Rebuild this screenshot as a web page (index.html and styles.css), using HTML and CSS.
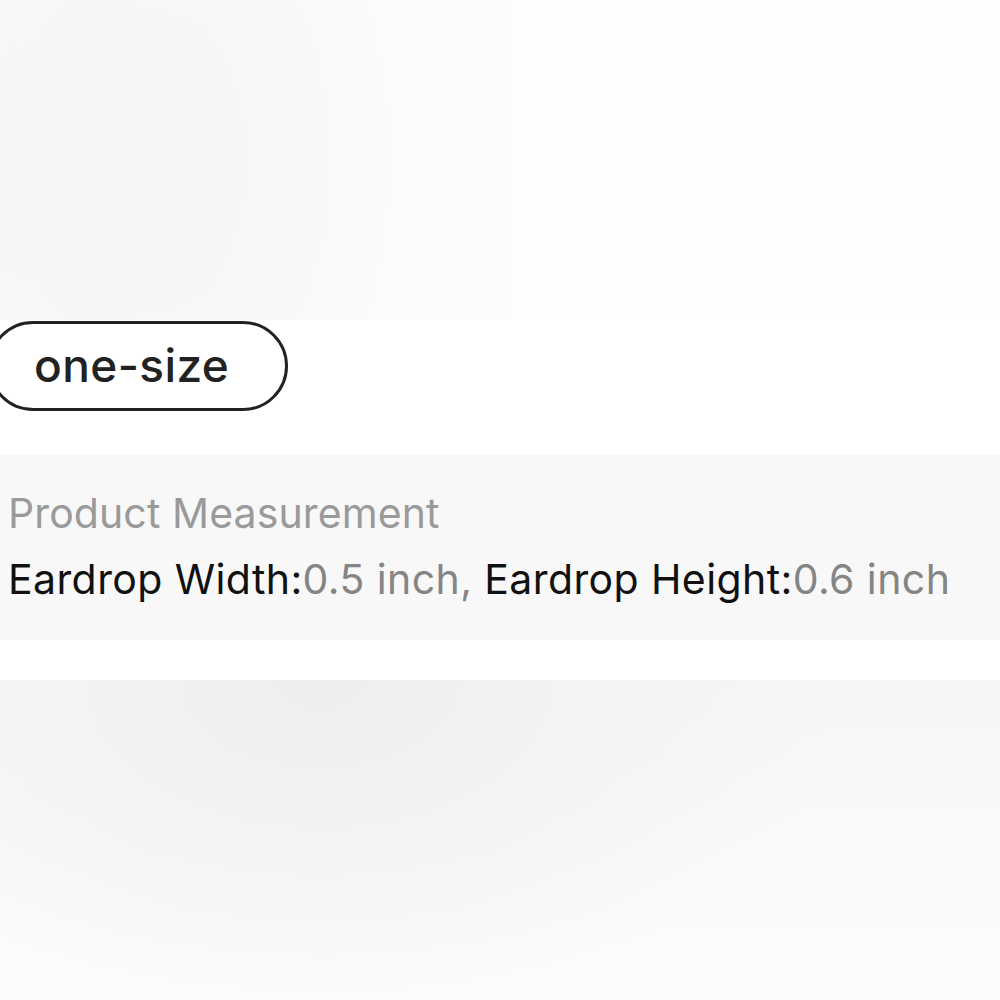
FILE: index.html
```html
<!DOCTYPE html>
<html>
<head>
<meta charset="utf-8">
<link rel="stylesheet" href="styles.css">
</head>
<body>
<div class="page">
  <div class="hero"></div>
  <div class="sizes">
    <div class="pill">one-size</div>
  </div>
  <div class="measure">
    <div class="label">Product Measurement</div>
    <div class="values"><span class="k">Eardrop Width:</span><span class="v">0.5 inch, </span><span class="k">Eardrop Height:</span><span class="v">0.6 inch</span></div>
  </div>
  <div class="gap"></div>
  <div class="bottom"></div>
</div>
</body>
</html>
```

FILE: styles.css
```css
* { box-sizing: border-box; }
html, body { margin: 0; padding: 0; }
body { font-family: Inter, "Noto Sans", sans-serif; background: #fff; }
.page { width: 1000px; height: 1000px; overflow: hidden; display: flex; flex-direction: column; }
.hero {
  height: 320px;
  background:
    radial-gradient(ellipse 260px 340px at 150px 160px, #f5f5f5 0%, rgba(250,250,250,0) 100%),
    linear-gradient(90deg, #f8f8f8 0%, #fbfbfb 35%, #fefefe 60%, #fefefe 100%);
}
.sizes { height: 135px; background: #fff; display: flex; align-items: flex-start; padding-top: 1px; }
.pill {
  margin-left: -12px;
  height: 90px;
  width: 300px;
  border: 3px solid #222;
  border-radius: 45px;
  display: flex; align-items: center;
  padding-left: 43px;
  font-size: 46px;
  font-weight: 500;
  letter-spacing: 0.4px;
  color: #222;
  padding-bottom: 2px;
}
.measure { height: 185px; background: #f8f8f8; padding: 35px 0 0 8px; }
.label { font-size: 41px; color: #9a9a9a; line-height: 46px; letter-spacing: 0.1px; }
.values { font-size: 41px; line-height: 46px; margin-top: 20px; white-space: nowrap; letter-spacing: 0.4px; }
.k { color: #111; }
.v { color: #858585; }
.gap { height: 40px; background: #fff; }
.bottom {
  flex: 1;
  background:
    radial-gradient(ellipse 520px 330px at 320px 0px, #eeeeee 0%, #f3f3f3 45%, rgba(250,250,250,0) 100%),
    linear-gradient(180deg, #f6f6f6 0%, #fafafa 55%, #fcfcfc 100%);
}
```
